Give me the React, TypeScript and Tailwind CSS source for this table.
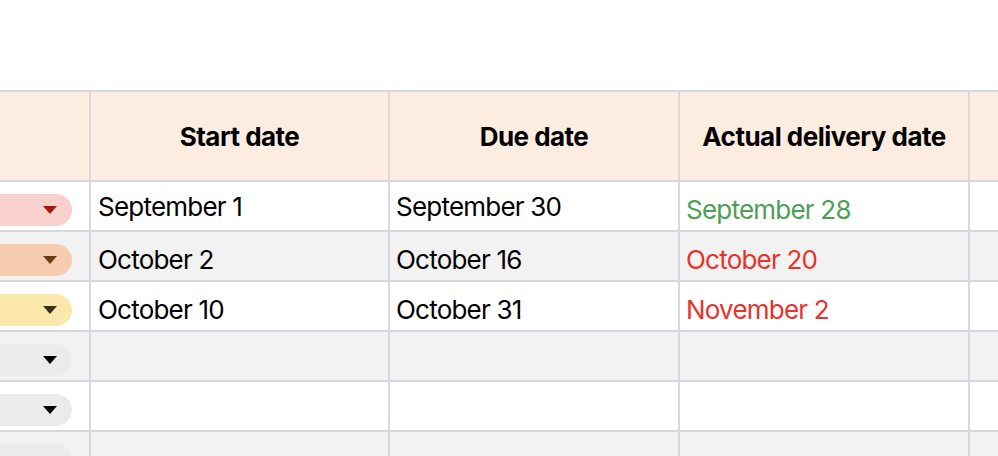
import React from "react";

type Row = {
  pill: string;
  arrow: string;
  start: string;
  due: string;
  actual: string;
  actualColor: string;
  pad: string;
  actualPad: string;
};

const rows: Row[] = [
  { pill: "bg-[#f8d1cd]", arrow: "#a3190f", start: "September 1", due: "September 30", actual: "September 28", actualColor: "text-[#4c9f55]", pad: "pt-[1px]", actualPad: "pt-[7px]" },
  { pill: "bg-[#f7cbad]", arrow: "#6d3b1a", start: "October 2", due: "October 16", actual: "October 20", actualColor: "text-[#e8332a]", pad: "pt-[7px]", actualPad: "pt-[7px]" },
  { pill: "bg-[#fbe8aa]", arrow: "#3d2f20", start: "October 10", due: "October 31", actual: "November 2", actualColor: "text-[#e8332a]", pad: "pt-[7px]", actualPad: "pt-[7px]" },
  { pill: "bg-[#ebebeb]", arrow: "#000000", start: "", due: "", actual: "", actualColor: "text-black", pad: "", actualPad: "" },
  { pill: "bg-[#ebebeb]", arrow: "#000000", start: "", due: "", actual: "", actualColor: "text-black", pad: "", actualPad: "" },
  { pill: "bg-[#ebebeb]", arrow: "#8a8a8a", start: "", due: "", actual: "", actualColor: "text-black", pad: "", actualPad: "" },
];

function Arrow({ color }: { color: string }) {
  return (
    <svg width="14" height="8" viewBox="0 0 14 8" className="shrink-0">
      <path d="M0 0 H14 L7 8 Z" fill={color} />
    </svg>
  );
}

export default function App() {
  const headerCell = "bg-[#fcede0] flex items-center justify-center text-[26px] font-bold tracking-[-0.02em] text-black";
  return (
    <div className="w-[998px] h-[456px] overflow-hidden bg-white" style={{ fontFamily: "Inter, 'Noto Sans', sans-serif" }}>
      <div className="pt-[90px]">
        <div className="grid grid-cols-[89px_297px_288px_288px_1fr] grid-rows-[88px_repeat(6,48px)] gap-[2px] pt-[2px] bg-[#d8d6e2]">
          <div className={headerCell}></div>
          <div className={headerCell}>Start date</div>
          <div className={headerCell}>Due date</div>
          <div className={headerCell}>Actual delivery date</div>
          <div className={headerCell}></div>
          {rows.map((r, i) => {
            const bg = i % 2 === 0 ? "bg-white" : "bg-[#f2f2f2]";
            const cell = `${bg} flex items-center text-[26px] tracking-[-0.03em]`;
            return (
              <React.Fragment key={i}>
                <div className={`${bg} flex justify-end items-start pt-[12px] pr-[17px] overflow-hidden`}>
                  <div className={`${r.pill} w-[140px] h-[32px] shrink-0 rounded-full flex items-center justify-end pr-[15px]`}>
                    <Arrow color={r.arrow} />
                  </div>
                </div>
                <div className={`${cell} pl-[7px] text-black ${r.pad}`}>{r.start}</div>
                <div className={`${cell} pl-[6px] text-black ${r.pad}`}>{r.due}</div>
                <div className={`${cell} pl-[6px] ${r.actualColor} ${r.actualPad}`}>{r.actual}</div>
                <div className={bg}></div>
              </React.Fragment>
            );
          })}
        </div>
      </div>
    </div>
  );
}
